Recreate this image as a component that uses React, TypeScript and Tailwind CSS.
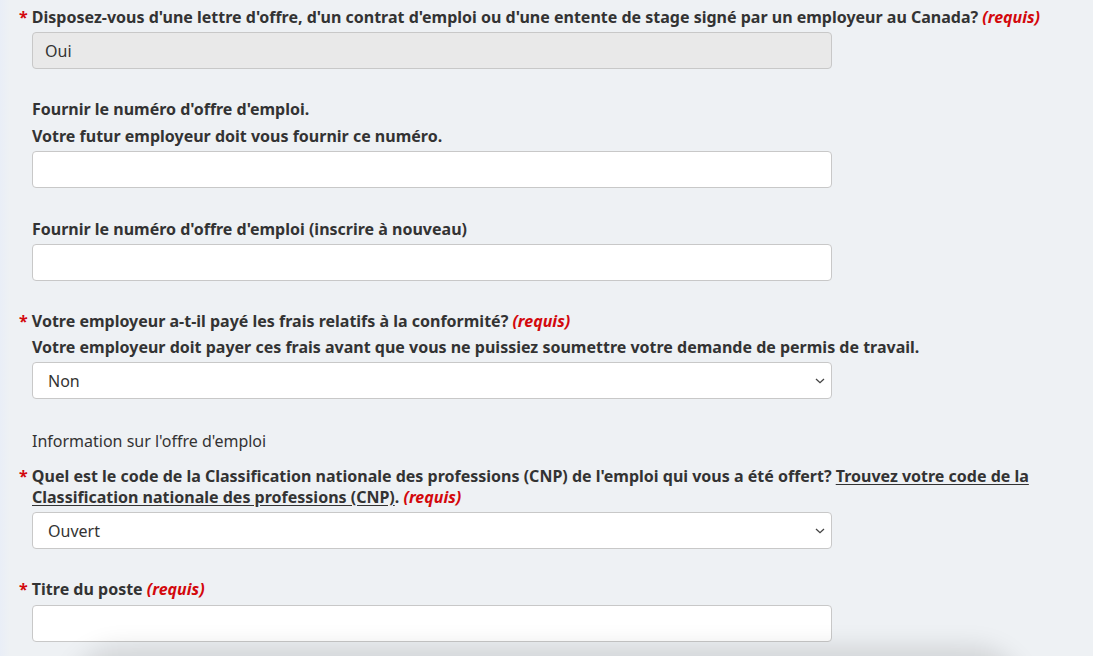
import React from 'react';

const Req = () => (
  <span className="italic text-[#d3080c]">(requis)</span>
);

const Star = () => <span className="text-[#d3080c]">* </span>;

const Chevron = () => (
  <svg
    className="absolute right-[6px] top-1/2 -translate-y-1/2"
    width="10"
    height="7"
    viewBox="0 0 10 7"
    fill="none"
  >
    <path d="M1 1.5 L5 5.2 L9 1.5" stroke="#444" strokeWidth="1.3" />
  </svg>
);

const TextBox = ({ value = '', disabled = false, last = false }: { value?: string; disabled?: boolean; last?: boolean }) => (
  <div
    className={`${last ? 'mt-[5px]' : 'mt-[4px]'} h-[37px] w-[800px] rounded-[4px] border border-[#c8c8c8] flex items-center text-[16px] text-[#333] ${
      disabled ? 'bg-[#e9e9e9] px-[12px]' : 'bg-white px-[16px]'
    }`}
  >
    {value}
  </div>
);

const SelectBox = ({ value }: { value: string }) => (
  <div className="relative mt-[4px] h-[37px] w-[800px] rounded-[4px] border border-[#c8c8c8] bg-white px-[15px] flex items-center text-[16px] text-[#333]">
    {value}
    <Chevron />
  </div>
);

export default function App() {
  return (
    <div
      className="min-h-screen overflow-hidden bg-[#eef1f4] bg-[linear-gradient(to_right,#e9eef7,#eef1f4_10px)] text-[#333]"
      style={{ fontFamily: '"Noto Sans", "Open Sans", sans-serif' }}
    >
      <form className="pl-[32px] pr-[14px] pt-[6px] text-[16px] leading-[22px]">
        <div>
          <p className="font-bold -indent-[13px]">
            <Star />
            Disposez-vous d'une lettre d'offre, d'un contrat d'emploi ou d'une entente de stage signé par un employeur au Canada? <Req />
          </p>
          <TextBox value="Oui" disabled />
        </div>

        <div className="mt-[29px]">
          <p className="font-bold">Fournir le numéro d'offre d'emploi.</p>
          <p className="mt-[5px] font-bold">Votre futur employeur doit vous fournir ce numéro.</p>
          <TextBox />
        </div>

        <div className="mt-[30px]">
          <p className="font-bold">Fournir le numéro d'offre d'emploi (inscrire à nouveau)</p>
          <TextBox />
        </div>

        <div className="mt-[29px]">
          <p className="font-bold -indent-[13px]">
            <Star />
            Votre employeur a-t-il payé les frais relatifs à la conformité? <Req />
          </p>
          <p className="mt-[4px] font-bold">
            Votre employeur doit payer ces frais avant que vous ne puissiez soumettre votre demande de permis de travail.
          </p>
          <SelectBox value="Non" />
        </div>

        <p className="mt-[31px]">Information sur l'offre d'emploi</p>

        <div className="mt-[14px]">
          <p className="font-bold leading-[21px] -indent-[13px]">
            <Star />
            Quel est le code de la Classification nationale des professions (CNP) de l'emploi qui vous a été offert?{' '}
            <span className="underline underline-offset-2">
              Trouvez votre code de la Classification nationale des professions (CNP)
            </span>
            . <Req />
          </p>
          <SelectBox value="Ouvert" />
        </div>

        <div className="mt-[29px]">
          <p className="font-bold -indent-[13px]">
            <Star />
            Titre du poste <Req />
          </p>
          <TextBox last />
        </div>
      </form>

      {/* ombre de la section suivante */}
      <div className="mx-[70px] mt-[14px] h-[60px] bg-[#eef1f4] shadow-[0_-8px_26px_rgba(0,0,0,0.13)] rounded-t-[50px]" />
    </div>
  );
}
